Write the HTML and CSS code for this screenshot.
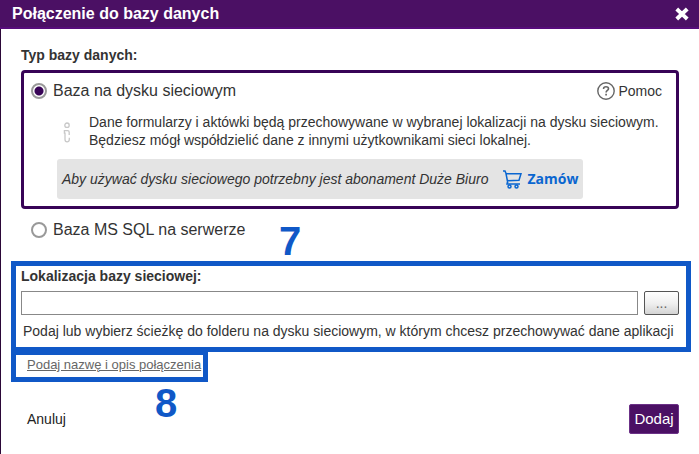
FILE: index.html
```html
<!DOCTYPE html>
<html lang="pl">
<head>
<meta charset="utf-8">
<title>Połączenie do bazy danych</title>
<link rel="stylesheet" href="styles.css">
</head>
<body>
<div class="dialog" role="dialog" aria-labelledby="dialog-title">
  <header class="titlebar">
    <h1 class="title" id="dialog-title">Połączenie do bazy danych</h1>
    <button class="close" type="button" aria-label="Zamknij">
      <svg width="14" height="14" viewBox="0 0 14 14"><path d="M3.2 3.4l7.6 7.2M10.8 3.4l-7.6 7.2" stroke="#fff" stroke-width="4" stroke-linecap="square"/></svg>
    </button>
  </header>
  <form class="content">
    <fieldset class="types">
      <legend class="heading">Typ bazy danych:</legend>
      <div class="card">
        <div class="card-head">
          <label class="option"><input class="radio" type="radio" name="type" checked>Baza na dysku sieciowym</label>
          <a class="help" href="#">
            <svg width="18" height="18" viewBox="0 0 18 18" fill="none" stroke="#666"><circle cx="9" cy="9" r="8.2" stroke-width="1.4"/><path d="M6.6 7V6.6C6.6 5.4 7.6 4.8 9 4.8s2.5.7 2.5 2c0 1.6-2.4 1.7-2.4 3.6" stroke-width="1.6"/><path d="M9.1 11.7v1.7" stroke-width="1.7"/></svg>
            Pomoc
          </a>
        </div>
        <div class="info">
          <svg class="info-icon" width="8" height="21" viewBox="0 0 8 21" fill="none" stroke="#c8c8c8" stroke-width="1.3"><circle cx="4" cy="3.2" r="2.2"/><path d="M6.2 13V10.2C6.2 9.1 5.6 8.6 4.6 8.6H1.4V11.2H2V17.6c0 1.4.8 2.2 2.1 2.2s2.2-.8 2.2-2.2v-1.8"/></svg>
          <p class="text">Dane formularzy i aktówki będą przechowywane w wybranej lokalizacji na dysku sieciowym. Będziesz mógł współdzielić dane z innymi użytkownikami sieci lokalnej.</p>
        </div>
        <div class="notice">
          <em>Aby używać dysku sieciowego potrzebny jest abonament Duże Biuro</em>
          <a class="order" href="#">
            <svg width="19" height="19" viewBox="0 0 19 19" fill="none" stroke="#0a66d0" stroke-width="1.5"><path d="M0 1h2l1 2.5 1.8 9.5M3 3.7h15l-2 6.6-11.5.4M4.8 10.5l-.8 3.4h13"/><circle cx="6.5" cy="16.5" r="1.5"/><circle cx="13.5" cy="16.5" r="1.5"/></svg>
            Zamów
          </a>
        </div>
      </div>
      <label class="option option-plain"><input class="radio" type="radio" name="type">Baza MS SQL na serwerze</label>
    </fieldset>
    <section class="callout location">
      <span class="number number-location">7</span>
      <label class="heading" for="path">Lokalizacja bazy sieciowej:</label>
      <div class="path-row">
        <input class="path" id="path" type="text">
        <button class="browse" type="button">...</button>
      </div>
      <p class="hint">Podaj lub wybierz ścieżkę do folderu na dysku sieciowym, w którym chcesz przechowywać dane aplikacji</p>
    </section>
    <section class="callout naming">
      <span class="number number-naming">8</span>
      <a class="naming-link" href="#">Podaj nazwę i opis połączenia</a>
    </section>
    <footer class="actions">
      <button class="cancel" type="button">Anuluj</button>
      <button class="submit" type="submit">Dodaj</button>
    </footer>
  </form>
</div>
</body>
</html>
```
FILE: styles.css
```css
* { box-sizing: border-box; }
body {
  margin: 0;
  background: #fff;
  color: #333;
  font: 14px/18px "Liberation Sans", Arial, sans-serif;
}
button, input { font: inherit; color: inherit; }
p { margin: 0; }
.dialog {
  display: flex;
  flex-direction: column;
  min-height: 100vh;
}
.titlebar {
  display: flex;
  align-items: center;
  justify-content: space-between;
  height: 29px;
  padding: 0 10px 0 12px;
  background: #4b1064;
  border-bottom: 2px solid #570c7b;
}
.title {
  margin: 0;
  color: #fff;
  font-size: 16px;
  line-height: 20px;
}
.close {
  display: flex;
  padding: 0;
  border: 0;
  background: none;
}
.content {
  flex: 1;
  padding: 17px 8px 0 10px;
  border-left: 1px solid #2b0838;
}
.types {
  margin: 0 12px 0 10px;
  padding: 0;
  border: 0;
}
.heading {
  display: block;
  padding: 0;
  font-weight: bold;
  font-size: 14px;
  line-height: 18px;
}
.card {
  margin-top: 6px;
  padding: 8px 14px 7px 7px;
  border: 3px solid #380457;
  border-radius: 4px;
}
.card-head {
  display: flex;
  align-items: center;
  justify-content: space-between;
}
.option {
  display: flex;
  align-items: center;
  gap: 6px;
  font-size: 16px;
  line-height: 20px;
}
.option-plain { margin: 11px 0 0 10px; }
.radio {
  appearance: none;
  width: 16px;
  height: 16px;
  margin: 0;
  border: 2px solid #999;
  border-radius: 50%;
  background: #fff;
}
.radio:checked { background: radial-gradient(circle, #380457 4px, #fff 5px); }
.help {
  display: flex;
  align-items: center;
  gap: 3px;
  color: #333;
  text-decoration: none;
}
.info {
  display: flex;
  gap: 18px;
  margin: 12px 0 0 32px;
}
.info-icon {
  flex: none;
  margin-top: 9px;
}
.notice {
  display: flex;
  align-items: center;
  gap: 15px;
  width: fit-content;
  min-height: 40px;
  margin: 10px 0 0 26px;
  padding: 0 5px;
  border-radius: 3px;
  background: #e4e4e4;
}
.order {
  display: flex;
  align-items: center;
  gap: 5px;
  color: #0a66d0;
  font-family: "Open Sans", sans-serif;
  font-weight: bold;
  text-decoration: none;
}
.callout {
  position: relative;
  border: 5px solid #1058c7;
}
.number {
  position: absolute;
  color: #1058c7;
  font-size: 40px;
  line-height: 40px;
  font-weight: bold;
}
.number-location { top: -45px; left: 263px; }
.number-naming { top: 28px; left: 139px; }
.location {
  margin-top: 21px;
  padding: 1px 7px 7px 5px;
}
.path-row {
  display: flex;
  gap: 6px;
  margin-top: 6px;
}
.path {
  flex: 1;
  min-width: 0;
  height: 24px;
  padding: 0 5px;
  border: 1px solid #888;
  background: #fff;
}
.browse {
  width: 35px;
  height: 24px;
  padding: 0;
  border: 1px solid #555;
  border-radius: 2px;
  background: linear-gradient(#fff, #f0f0f0 50%, #d4d4d4);
  color: #666;
}
.hint {
  margin: 7px 0 0 2px;
}
.naming {
  width: fit-content;
  margin-top: -2px;
  padding: 0 2px 2px 11px;
}
.naming-link {
  display: block;
  color: #666;
  font-size: 13px;
  line-height: 20px;
}
.actions {
  display: flex;
  align-items: center;
  justify-content: space-between;
  margin: 22px 12px 20px 16px;
}
.cancel {
  padding: 0;
  border: 0;
  background: none;
  color: #222;
}
.submit {
  width: 50px;
  height: 30px;
  padding: 0;
  border: 1px solid #6b3187;
  border-radius: 2px;
  background: #4b1064;
  color: #fff;
  font-size: 15px;
}
```
